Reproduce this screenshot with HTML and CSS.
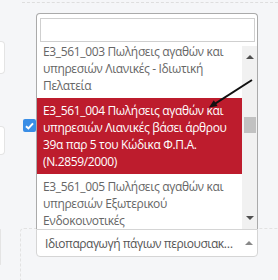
FILE: index.html
```html
<!DOCTYPE html>
<html lang="el">
<head>
    <meta charset="UTF-8">
    <title>Επιλογή χαρακτηρισμού</title>
    <link rel="stylesheet" href="styles.css">
</head>
<body>
    <div class="screen">

        <!-- φόρμα στο παρασκήνιο -->
        <div class="form">
            <div class="top-rule"></div>
            <div class="row row-one">
                <div class="field-stub"></div>
            </div>
            <div class="row row-two">
                <div class="field-stub stub-two"></div>
                <span class="check">
                    <svg width="9" height="8" viewBox="0 0 9 8"><path d="M1 4.2 L3.4 6.4 L8 1.4" fill="none" stroke="#fff" stroke-width="2"/></svg>
                </span>
            </div>
            <div class="row row-three">
                <div class="field-stub stub-three"></div>
                <div class="dashed-box"></div>
            </div>
        </div>

        <!-- ανοιχτό select2 (dropdown προς τα πάνω) -->
        <div class="select">
            <div class="dropdown">
                <div class="search"><input type="text"></div>
                <div class="results">
                    <ul class="options">
                        <li>Ε3_561_003 Πωλήσεις αγαθών και υπηρεσιών Λιανικές - Ιδιωτική Πελατεία</li>
                        <li class="selected">Ε3_561_004 Πωλήσεις αγαθών και υπηρεσιών Λιανικές βάσει άρθρου 39α παρ 5 του Κώδικα Φ.Π.Α. (Ν.2859/2000)</li>
                        <li>Ε3_561_005 Πωλήσεις αγαθών και υπηρεσιών Εξωτερικού Ενδοκοινοτικές</li>
                    </ul>
                    <div class="scrollbar">
                        <div class="sb-btn"><span class="tri-up"></span></div>
                        <div class="sb-track"><div class="sb-thumb"></div></div>
                        <div class="sb-btn"><span class="tri-down"></span></div>
                    </div>
                </div>
            </div>
            <div class="selection">
                <span class="selection-text">Ιδιοπαραγωγή πάγιων περιουσιακών στοιχείων</span>
                <span class="sel-arrow"></span>
            </div>
        </div>

        <!-- βέλος σημείωσης -->
        <svg class="pointer" width="278" height="280" viewBox="0 0 278 280">
            <line x1="252" y1="80" x2="214" y2="104.3" stroke="#111" stroke-width="2"/>
            <polygon points="209,107.5 217.6,106.1 213.8,100.3" fill="#111"/>
        </svg>
    </div>
</body>
</html>
```

FILE: styles.css
```css
body {
    margin: 0;
    background: #f5f6f8;
    font-family: 'Open Sans', 'Liberation Sans', sans-serif;
}

.screen {
    position: relative;
    width: 278px;
    height: 280px;
    overflow: hidden;
}

/* φόρμα */
.form {
    padding-top: 2px;
}

.top-rule {
    margin-left: 22px;
    border-top: 1px dashed #dedede;
}

.row {
    display: flex;
    align-items: flex-start;
}

.row-one {
    margin-top: 38px;
}

.field-stub {
    width: 4px;
    height: 31px;
    background: #fff;
    border: 1px solid #e4e4e4;
    border-left: none;
    border-radius: 0 4px 4px 0;
}

.row-two {
    margin-top: 45px;
}

.stub-two {
    margin-top: 7px;
    height: 27px;
}

.check {
    width: 13px;
    height: 13px;
    margin-left: 18px;
    border-radius: 2px;
    background: #3a8ee6;
    display: flex;
    align-items: center;
    justify-content: center;
}

.row-three {
    margin-top: 73px;
}

.stub-three {
    margin-top: 1px;
    height: 34px;
}

.dashed-box {
    margin-left: 19px;
    width: 280px;
    height: 63px;
    border: 1px dashed #e2e2e2;
    border-radius: 4px;
    flex-shrink: 0;
}

/* select2 */
.select {
    position: absolute;
    left: 36px;
    top: 13px;
    width: 222px;
}

.dropdown {
    background: #fff;
    border: 1px solid #aaa;
    border-bottom: none;
    border-radius: 4px 4px 0 0;
}

.search {
    padding: 4px 2px 4px 3px;
}

.search input {
    display: block;
    box-sizing: border-box;
    width: 100%;
    height: 24px;
    margin: 0;
    border: 1px solid #cfcfcf;
    outline: none;
}

.results {
    display: flex;
    height: 183px;
}

.options {
    flex: 1;
    margin: 0;
    padding: 0;
    list-style: none;
    overflow: hidden;
}

.options li {
    padding: 4px 6px;
    font-size: 12px;
    line-height: 17px;
    letter-spacing: -0.35px;
    color: #666;
}

.options li:first-child {
    margin-top: -7px;
}

.options .selected {
    background: #bd1c2d;
    color: #fff;
}

.scrollbar {
    width: 15px;
    background: #f1f1f1;
    display: flex;
    flex-direction: column;
}

.sb-btn {
    height: 22px;
    display: flex;
    align-items: center;
    justify-content: center;
}

.tri-up {
    border-left: 4px solid transparent;
    border-right: 4px solid transparent;
    border-bottom: 4px solid #505050;
}

.tri-down {
    border-left: 4px solid transparent;
    border-right: 4px solid transparent;
    border-top: 4px solid #505050;
}

.sb-track {
    flex: 1;
}

.sb-thumb {
    margin: 49px 1px 0 2px;
    height: 16px;
    background: #c1c1c1;
}

.selection {
    box-sizing: border-box;
    height: 28px;
    background: #fff;
    border: 1px solid #d5d5d5;
    border-radius: 0 0 4px 4px;
    display: flex;
    align-items: center;
    padding: 0 4px 0 8px;
    gap: 6px;
}

.selection-text {
    flex: 1;
    font-size: 12px;
    letter-spacing: -0.45px;
    color: #555;
    white-space: nowrap;
    overflow: hidden;
    text-overflow: ellipsis;
}

.sel-arrow {
    border-left: 4px solid transparent;
    border-right: 4px solid transparent;
    border-bottom: 4px solid #888;
}

/* βέλος */
.pointer {
    position: absolute;
    left: 0;
    top: 0;
}
```
